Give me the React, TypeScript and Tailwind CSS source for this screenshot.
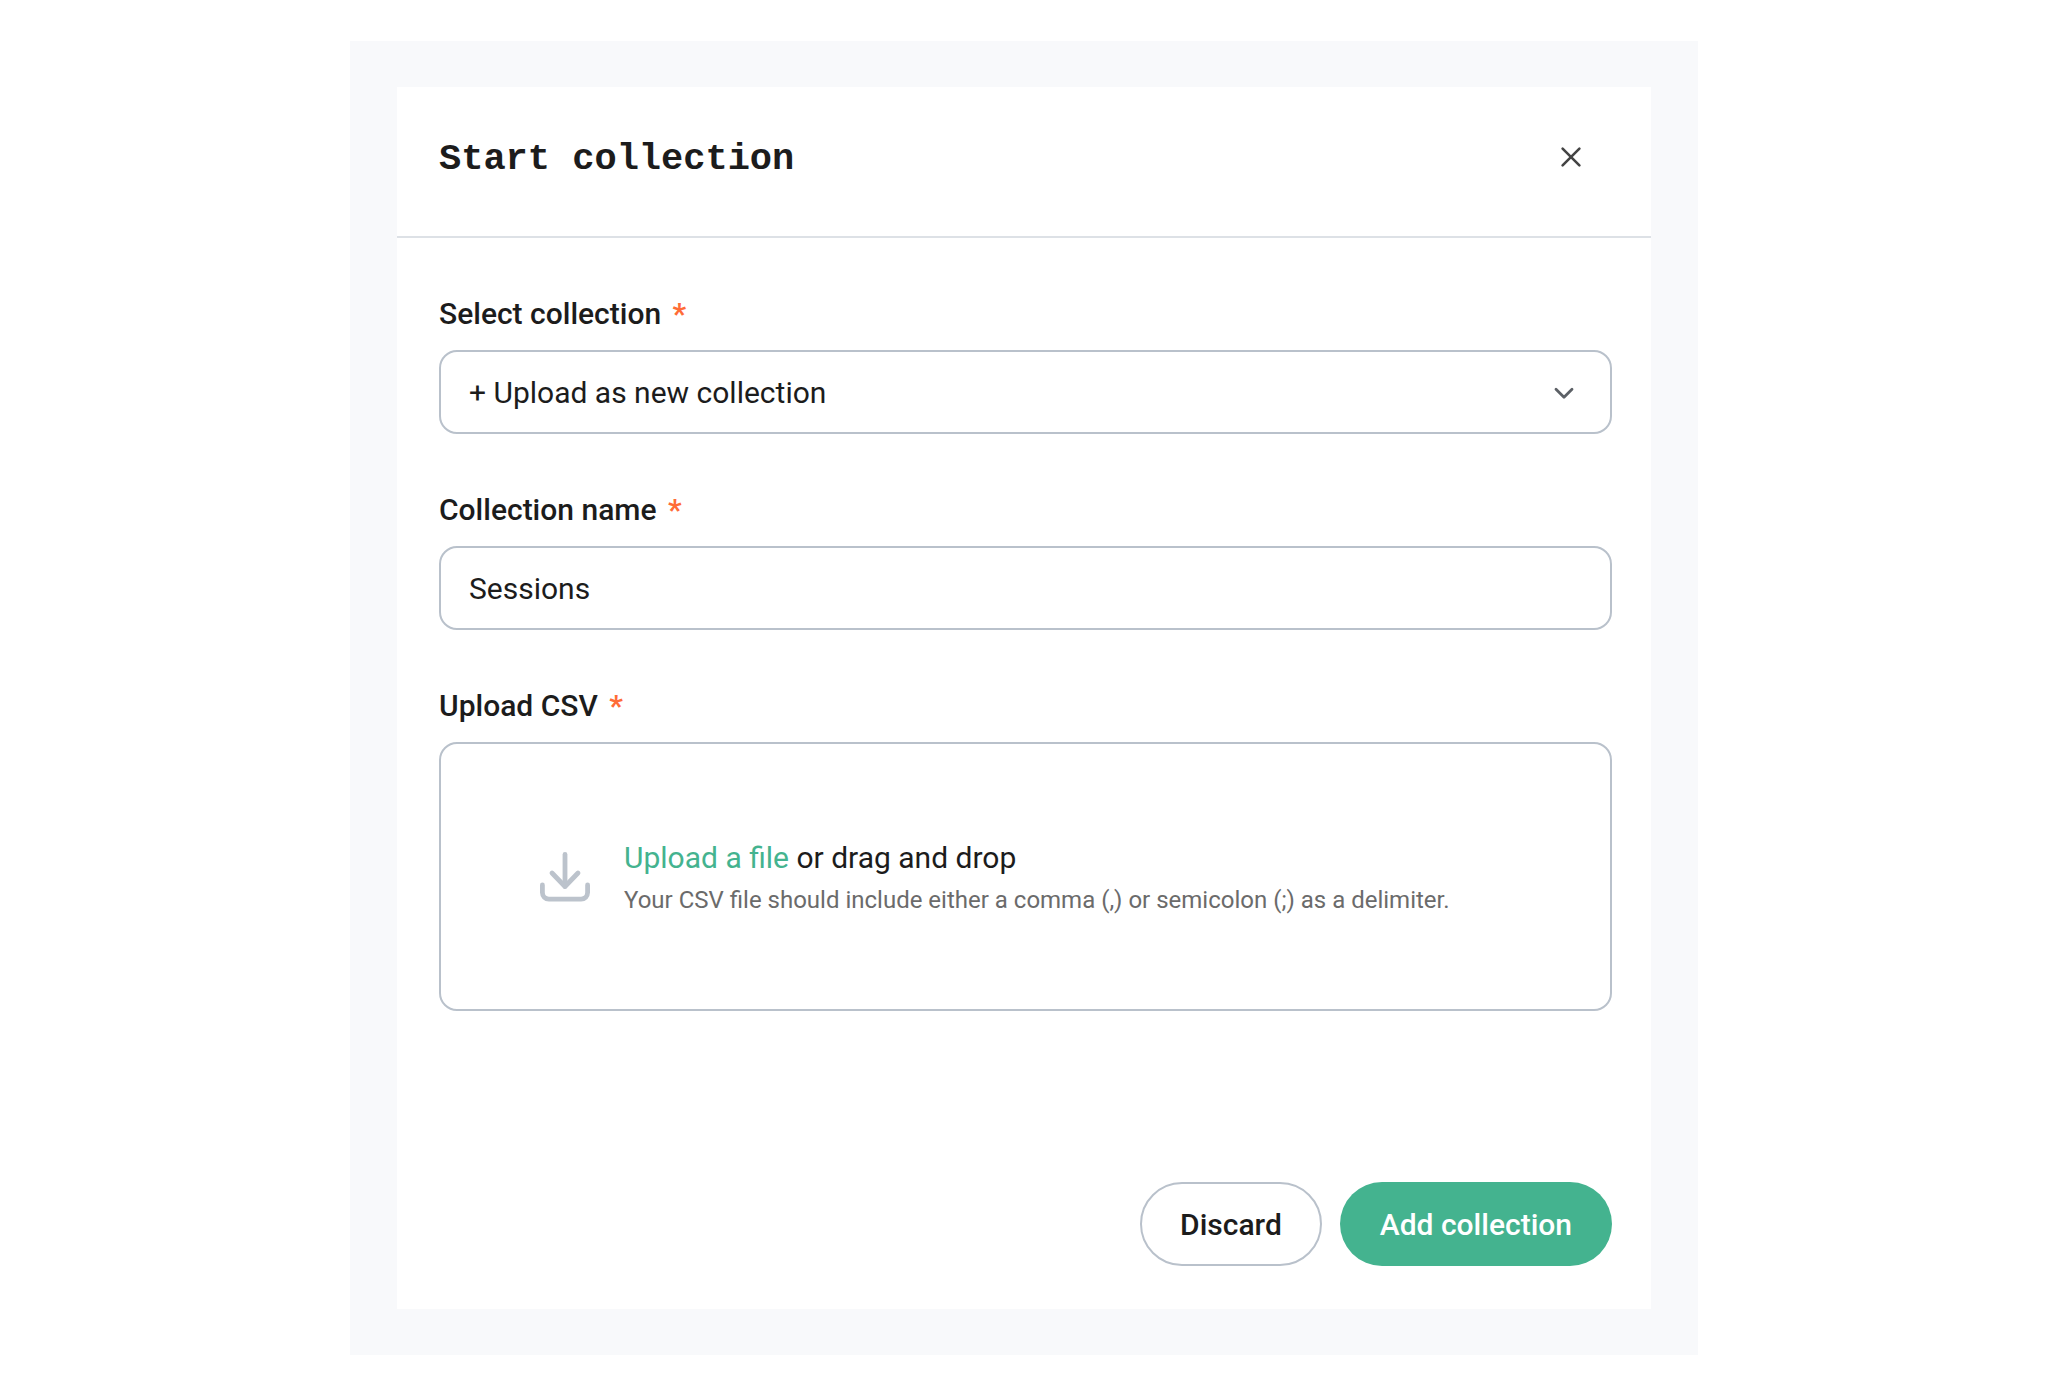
import { useState } from "react";
import type { ReactNode } from "react";

type FieldProps = {
  id: string;
  label: string;
  children: ReactNode;
};

function Field({ id, label, children }: FieldProps) {
  return (
    <div className="flex flex-col gap-5">
      <label htmlFor={id} className="text-[30px] leading-8 font-medium">
        {label} <span className="ml-1 font-bold text-[#ff6c37]">*</span>
      </label>
      {children}
    </div>
  );
}

function CloseIcon() {
  return (
    <svg viewBox="0 0 24 24" fill="none" stroke="currentColor" strokeWidth="2.6" strokeLinecap="round" className="h-6 w-6">
      <path d="M3.600 3.600l16.800 16.800M20.400 3.600l-16.800 16.800" />
    </svg>
  );
}

function ChevronIcon() {
  return (
    <svg viewBox="0 0 24 24" fill="none" stroke="currentColor" strokeWidth="2.8" strokeLinecap="round" strokeLinejoin="round" className="h-6 w-6">
      <path d="M4 9.200l8 8 8-8" />
    </svg>
  );
}

function DownloadIcon() {
  return (
    <svg viewBox="0 0 50 50" fill="none" stroke="currentColor" strokeWidth="4.8" strokeLinecap="round" strokeLinejoin="round" className="h-[50px] w-[50px] shrink-0">
      <path d="M25 2.400v32" />
      <path d="M12 21l13 13.500 13-13.500" />
      <path d="M2.400 33v7.600a6.500 6.500 0 0 0 6.500 6.500h32.200a6.500 6.500 0 0 0 6.500-6.500v-7.600" />
    </svg>
  );
}

export default function App() {
  const [name, setName] = useState("Sessions");

  return (
    <main className="min-h-screen bg-white px-4 py-[41px] font-['Roboto',sans-serif] text-[#1c1c1c]">
      <div className="mx-auto max-w-[1348px] bg-[#f8f9fb] px-[47px] py-[46px]">
        <form className="bg-white" onSubmit={(e) => e.preventDefault()}>
          {/* Header */}
          <header className="flex items-center justify-between border-b-2 border-[#dde1e6] pt-12 pr-[68px] pb-[57px] pl-[42px]">
            <h1 className="pt-1 font-['Liberation_Mono',monospace] text-[37px] leading-10 font-bold">
              Start collection
            </h1>
            <button type="button" aria-label="Close" className="text-[#444444]">
              <CloseIcon />
            </button>
          </header>

          {/* Fields */}
          <div className="flex flex-col gap-[60px] pt-[60px] pr-[39px] pl-[42px]">
            <Field id="collection" label="Select collection">
              <div className="relative">
                <select
                  id="collection"
                  className="h-[84px] w-full appearance-none rounded-[18px] border-2 border-[#b9c1cb] bg-white px-7 text-[30px]"
                >
                  <option>+ Upload as new collection</option>
                </select>
                <span className="pointer-events-none absolute inset-y-0 right-9 flex items-center text-[#5c6066]">
                  <ChevronIcon />
                </span>
              </div>
            </Field>

            <Field id="name" label="Collection name">
              <input
                id="name"
                type="text"
                value={name}
                onChange={(e) => setName(e.target.value)}
                className="h-[84px] w-full rounded-[18px] border-2 border-[#b9c1cb] bg-white px-7 text-[30px]"
              />
            </Field>

            <Field id="file" label="Upload CSV">
              <div className="flex min-h-[269px] items-center gap-[34px] rounded-[18px] border-2 border-[#b9c1cb] px-[99px] text-[#bcc3cc]">
                <DownloadIcon />
                <div className="pt-0.5">
                  <p className="text-[30px] leading-[44px] text-[#1c1c1c]">
                    <label htmlFor="file" className="cursor-pointer text-[#44b38f]">
                      Upload a file
                    </label>{" "}
                    or drag and drop
                  </p>
                  <p className="text-2xl leading-10 text-[#6b6b6b]">
                    Your CSV file should include either a comma (,) or semicolon (;) as a delimiter.
                  </p>
                  <input id="file" type="file" accept=".csv" className="sr-only" />
                </div>
              </div>
            </Field>
          </div>

          {/* Actions */}
          <footer className="flex justify-end gap-[18px] pt-[171px] pr-[39px] pb-[43px] text-[30px] font-medium">
            <button type="button" className="h-[84px] rounded-full border-2 border-[#b9c1cb] px-[38px]">
              Discard
            </button>
            <button type="submit" className="h-[84px] rounded-full bg-[#44b38f] px-10 text-white">
              Add collection
            </button>
          </footer>
        </form>
      </div>
    </main>
  );
}
